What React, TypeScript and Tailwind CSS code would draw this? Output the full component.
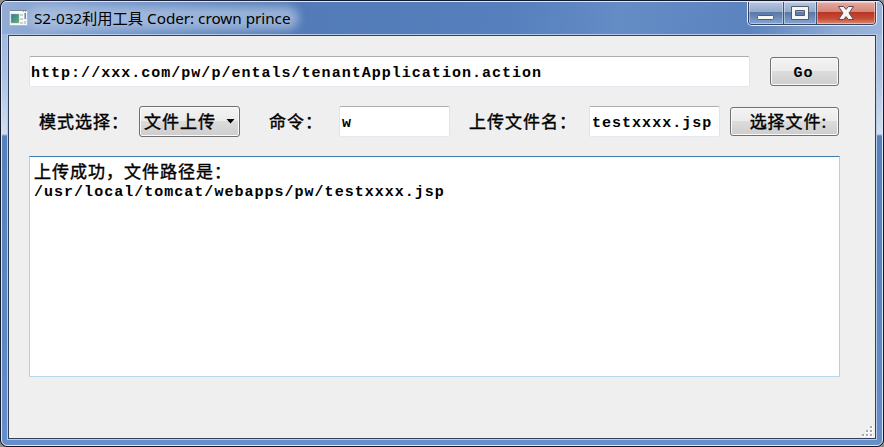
import React from "react";

const mono = "font-['Liberation_Mono','Noto_Sans_CJK_SC',monospace] font-bold text-[15px] tracking-[1.02px] text-black whitespace-pre";
const cjk = "font-['Noto_Sans_CJK_SC',sans-serif] font-normal [-webkit-text-stroke:0.4px_black] text-[17px] leading-[20px] tracking-[1px] text-black whitespace-pre";
const field = "rounded-[2px] border border-x-[#e2e3ea] border-t-[#abadb3] border-b-[#e3e9ef] bg-white";
const button = "flex items-center justify-center rounded-[3px] border border-[#707070] bg-[linear-gradient(#f3f3f3_0%,#ebebeb_49%,#dcdcdc_50%,#cdcdcd_100%)] shadow-[inset_0_0_0_1px_#fafafa]";

function AppIcon() {
  return (
    <svg width="19" height="17" viewBox="0 0 19 17" className="shrink-0">
      <defs>
        <linearGradient id="screen" x1="0" y1="0" x2="1" y2="1">
          <stop offset="0" stopColor="#3f74a4" />
          <stop offset="1" stopColor="#58b768" />
        </linearGradient>
      </defs>
      <rect x="0.5" y="0.5" width="18" height="15" fill="#fbfbfb" stroke="#b4b8ba" />
      <path d="M1 .5h17" stroke="#7f8b94" />
      <path d="M14 1h1M16 1h1" stroke="#3c6c9c" />
      <rect x="2" y="4" width="8" height="9" fill="url(#screen)" stroke="#9fb7bd" strokeWidth=".5" />
      <path d="M11 4h3v2h-3zM11 8h3v2h-3zM11 12h3v2h-3zM15 11h2v3h-2z" fill="#d0d2d3" />
      <rect x="15.5" y="3" width="1.5" height="6" fill="#468b91" />
    </svg>
  );
}

function CaptionButtons() {
  return (
    <div className="flex h-[24px] w-[130px] self-start overflow-hidden rounded-b-[5px] border border-t-0 border-[#e5ecf7]">
      <div className="flex w-full overflow-hidden rounded-b-[4px] border border-t-0 border-[#39455f]">
        <div className="flex w-[35px] justify-center border-r border-[#46546f] bg-[linear-gradient(#b5c6df_0%,#93a9cb_45%,#5876a6_48%,#86a6d3_100%)] shadow-[inset_0_0_0_1px_#ffffff66]">
          <svg width="18" height="22" viewBox="0 0 18 22"><rect x=".5" y="13.5" width="16" height="4" rx="1" fill="#f6f6f6" stroke="#535b70" /></svg>
        </div>
        <div className="flex w-[33px] justify-center border-r border-[#46546f] bg-[linear-gradient(#b5c6df_0%,#93a9cb_45%,#5876a6_48%,#86a6d3_100%)] shadow-[inset_0_0_0_1px_#ffffff66]">
          <svg className="-ml-px" width="18" height="22" viewBox="0 0 18 22"><path d="M.5 4.5h17v13H.5z M4.5 8.5v5h9v-5z" fill="#f6f6f6" fillRule="evenodd" stroke="#535b70" /></svg>
        </div>
        <div className="flex flex-1 justify-center bg-[linear-gradient(#e5aaa0_0%,#d58679_44%,#b93523_47%,#c44c35_75%,#df8a70_100%)] shadow-[inset_0_0_0_1px_#ffffff66]">
          <svg width="18" height="22" viewBox="0 0 18 22"><path d="M1.5 4.5h5L9 7.4l2.5-2.9h5L12 11l4.5 6.5h-5L9 14.6l-2.5 2.9h-5L6 11z" fill="#f6f6f6" stroke="#604b52" strokeLinejoin="round" /></svg>
        </div>
      </div>
    </div>
  );
}

function SizeGrip() {
  return (
    <svg width="12" height="12" viewBox="0 0 12 12">
      {[[9, 1], [5, 5], [9, 5], [1, 9], [5, 9], [9, 9]].map(([x, y]) => (
        <g key={`${x}-${y}`}><rect x={x} y={y} width="3" height="3" fill="#fff" /><rect x={x} y={y} width="2" height="2" fill="#a9a9a9" /></g>
      ))}
    </svg>
  );
}

export default function App() {
  return (
    <div className="h-[447px] w-[884px] overflow-hidden bg-[#8d8d8d]">
      <div className="h-[447px] w-[884px] rounded-[7px] border border-[#14182b] bg-[#14182b]">
        <div className="flex h-[445px] w-[882px] flex-col rounded-[6px] border border-[#dce8f8] bg-[linear-gradient(#9bb4da_0px,#a9c0e2_70px,#d2deee_132px,#5681bb_134px,#5b86c2_300px,#668ec8_443px)]">
          <div className="-mt-px flex h-[33px] shrink-0 rounded-t-[5px] border-t border-[#dce8f8] bg-[linear-gradient(100deg,#93add5_0px,#7598cb_100px,#527bb7_290px,#5580bd_500px,#648cc5_610px,#5b83be_740px,#92acd5_830px,#9bb5dc_880px)] pl-[7px]">
            <div className="flex flex-1 items-center">
              <AppIcon />
              <div className="ml-[6px] h-[12px] rounded-[6px] bg-[#b5c7e4aa] pr-[2px] font-['Noto_Sans','Noto_Sans_CJK_SC',sans-serif] text-[15.3px] leading-[12px] tracking-[-0.04px] whitespace-pre text-black shadow-[0_0_8px_6px_#b5c7e4aa]">S2-032利用工具 Coder: crown prince</div>
            </div>
            <CaptionButtons />
            <div className="w-[5px]" />
          </div>
          <div className="mx-[5px] mb-[5px] flex-1 border border-[#b8cbe7]">
            <div className="flex h-full flex-col border border-[#30415f] bg-[#efefef]">
              <div className="flex h-[51px] items-end pl-[20px]">
                <div className={`${field} flex h-[31px] w-[721px] items-center pl-[1px]`}>
                  <span className={`${mono} pt-[5px]`}>http://xxx.com/pw/p/entals/tenantApplication.action</span>
                </div>
                <div className={`${button} mb-px ml-[20px] h-[29px] w-[69px]`}><span className={`${mono} pt-[5px] pr-[2px]`}>Go</span></div>
              </div>
              <div className="mt-[19px] flex h-[31px] items-center">
                <span className={`${cjk} ml-[30px] w-[100px] pb-[2px]`}>模式选择：</span>
                <div className={`${button} h-[31px] w-[101px]`}>
                  <span className={`${cjk} pb-[2px]`}>文件上传</span>
                  <svg className="ml-[10px]" width="9" height="5" viewBox="0 0 9 5"><path d="M.5 0h8L4.5 4.5z" fill="#000" /></svg>
                </div>
                <span className={`${cjk} ml-[29px] w-[70px] pb-[2px]`}>命令：</span>
                <div className={`${field} flex h-[31px] w-[111px] items-center pl-[2px]`}><span className={`${mono} pt-[5px]`}>w</span></div>
                <span className={`${cjk} ml-[19px] w-[120px] pb-[2px]`}>上传文件名：</span>
                <div className={`${field} flex h-[31px] w-[131px] items-center pl-[2px]`}><span className={`${mono} pt-[5px]`}>testxxxx.jsp</span></div>
                <div className={`${button} ml-[10px] h-[29px] w-[109px] pl-[8px]`}><span className={`${cjk} pb-[2px]`}>选择文件:</span></div>
              </div>
              <div className="mt-[19px] ml-[20px] h-[221px] w-[811px] border border-x-[#b5cfe7] border-t-[#3d7bad] border-b-[#b7d9ed] bg-white pt-[4px] pl-[4px]">
                <div className={cjk}>上传成功，文件路径是：</div>
                <div className={`${mono} pt-[2px] leading-[20px]`}>/usr/local/tomcat/webapps/pw/testxxxx.jsp</div>
              </div>
              <div className="flex flex-1 items-end justify-end pr-[2px] pb-[1px]"><SizeGrip /></div>
            </div>
          </div>
        </div>
      </div>
    </div>
  );
}
